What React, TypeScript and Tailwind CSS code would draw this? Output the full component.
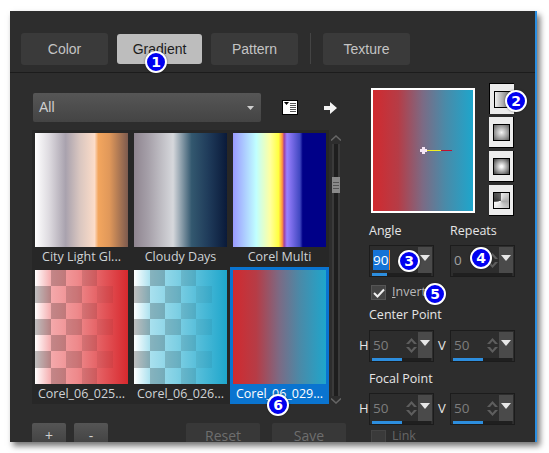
import React from "react";

const RED_BLUE = "bg-[linear-gradient(90deg,#d12a2f_0%,#b63c46_25%,#7b6b85_50%,#4a8aa8_72%,#1ea6cc_100%)]";

// how strong the darker squares are per column, fades out to the right
const CHECK = ["bg-black/25", "bg-black/20", "bg-black/15", "bg-black/10", "bg-black/5", ""];

const Badge = ({ n, className }: { n: number; className: string }) => (
  <div
    className={`absolute flex h-[22px] w-[22px] items-center justify-center rounded-full border-2 border-white bg-[#0000f0] font-['DejaVu_Sans'] text-[14px] leading-none font-bold text-white shadow-[0_0_2px_rgba(0,0,0,0.5)] ${className}`}
  >
    {n}
  </div>
);

const Tab = ({ label, active }: { label: string; active?: boolean }) => (
  <button
    className={
      active
        ? "h-[30px] w-[85px] rounded-[3px] bg-[#bdbdbd] text-[14px] text-[#1c1c1c]"
        : "h-[32px] w-[87px] rounded-[3px] bg-[#3a3a3a] text-[14px] text-[#c4c4c4]"
    }
  >
    {label}
  </button>
);

const Checker = () => (
  <div className="grid h-full w-full grid-cols-6 grid-rows-7">
    {Array.from({ length: 42 }).map((_, i) => {
      const row = Math.floor(i / 6);
      const col = i % 6;
      return <div key={i} className={(row + col) % 2 === 1 ? CHECK[col] : ""} />;
    })}
  </div>
);

const Thumb = ({
  label,
  bg,
  checker,
  selected,
}: {
  label: string;
  bg: string;
  checker?: boolean;
  selected?: boolean;
}) => (
  <div className={selected ? "h-[137px] w-[99px] bg-[#0a74d0] p-[3px] pb-0" : "h-[137px] w-[99px] p-[3px] pb-0"}>
    <div className={`h-[114px] w-[93px] ${bg}`}>{checker && <Checker />}</div>
    <div className={selected ? "h-[20px] text-center text-[12.5px] leading-[20px] whitespace-nowrap text-white" : "h-[20px] text-center text-[12.5px] leading-[20px] whitespace-nowrap text-[#cfd3d6]"}>
      {label}
    </div>
  </div>
);

const Spin = ({ value, bar, selected, bright }: { value: string; bar: string; selected?: boolean; bright?: boolean }) => (
  <div className="relative h-[32px] w-[65px] border border-[#1c1c1c] bg-[#2d2d2d] p-[1px]">
    <div className="flex h-[26px]">
      <div className="flex w-[34px] items-center pl-[2px] text-[13.5px]">
        {selected ? (
          <span className="border-r border-[#f08020] bg-[#1573d6] pr-[1px] text-white">{value}</span>
        ) : (
          <span className={bright ? "text-[#a0a0a0]" : "text-[#7d7d7d]"}>{value}</span>
        )}
      </div>
      <div className="flex w-[14px] flex-col items-center justify-center gap-[3px]">
        <svg width="11" height="6" viewBox="0 0 11 6"><path d="M0 6L5.5 0L11 6H8L5.5 3L3 6Z" fill="#5e5e5e" /></svg>
        <svg width="11" height="6" viewBox="0 0 11 6"><path d="M0 0L5.5 6L11 0H8L5.5 3L3 0Z" fill="#5e5e5e" /></svg>
      </div>
      <div className="ml-auto flex w-[14px] justify-center bg-[#4a4a4a] pt-[8px]">
        <svg width="10" height="6" viewBox="0 0 10 6"><path d="M0 0H10L5 6Z" fill="#e8e8e8" /></svg>
      </div>
    </div>
    <div className="mx-[1px] h-[3px] bg-[#1f1f1f]">
      <div className={`h-full bg-[#2d8ede] ${bar}`} />
    </div>
  </div>
);

const TypeButton = ({ inner, pressed }: { inner: string; pressed?: boolean }) => (
  <div
    className={
      pressed
        ? "flex h-[31px] w-[25px] items-center justify-center border-t border-l border-black bg-[#ececec]"
        : "flex h-[31px] w-[25px] items-center justify-center border-r border-b border-black bg-[#ececec]"
    }
  >
    <div className={`h-[17px] w-[17px] border border-black ${inner}`} />
  </div>
);

const Label = ({ children, className = "" }: { children: React.ReactNode; className?: string }) => (
  <div className={`text-[12.5px] leading-[18px] text-[#e6e6e6] ${className}`}>{children}</div>
);

const SpinRow = () => (
  <div className="flex items-center">
    <div className="w-[10px] text-[13px] text-[#e6e6e6]">H</div>
    <Spin value="50" bar="w-1/2" />
    <div className="w-[16px] text-center text-[13px] text-[#e6e6e6]">V</div>
    <Spin value="50" bar="w-1/2" />
  </div>
);

const ActionButton = ({ label, w, dim }: { label: string; w: string; dim?: boolean }) => (
  <button
    className={
      dim
        ? `h-[19px] rounded-t-[2px] bg-[#383838] pt-[6px] text-[14px] leading-[14px] text-[#6e6e6e] ${w}`
        : `h-[19px] rounded-t-[2px] bg-[linear-gradient(180deg,#555,#444)] pt-[6px] text-[14px] leading-[14px] text-[#d0d0d0] ${w}`
    }
  >
    {label}
  </button>
);

export default function App() {
  return (
    <div className="h-[453px] w-[549px] overflow-hidden bg-white pt-[11px] pl-[10px] font-['Open_Sans',sans-serif]">
      <div className="relative h-[431px] w-[527px] overflow-hidden border-r-2 border-[#2a8ee0] bg-[#2d2d2d] shadow-[3px_4px_6px_rgba(0,0,0,0.55)]">
        {/* tabs */}
        <div className="flex h-[62px] items-start gap-[9px] border-b border-[#1c1c1c] pt-[22px] pl-[11px] font-['Liberation_Sans',sans-serif]">
          <Tab label="Color" />
          <div className="pt-[1px]">
            <Tab label="Gradient" active />
          </div>
          <Tab label="Pattern" />
          <div className="mx-[3px] h-[31px] w-px bg-[#444]" />
          <Tab label="Texture" />
        </div>

        <div className="flex">
          {/* left side */}
          <div className="w-[349px] pt-[20px] pl-[22px]">
            <div className="ml-[1px] flex items-center">
              <div className="flex h-[29px] w-[228px] items-center justify-between rounded-[2px] bg-[linear-gradient(180deg,#565656,#444)] pr-[7px] pl-[6px] font-['Liberation_Sans',sans-serif] text-[14px] text-[#cfcfcf]">
                All
                <svg width="7" height="4" viewBox="0 0 7 4"><path d="M0 0H7L3.5 4Z" fill="#cfcfcf" /></svg>
              </div>
              <svg className="ml-[21px]" width="16" height="15" viewBox="0 0 16 15">
                <rect x="0.5" y="0.5" width="15" height="14" fill="#fff" stroke="#000" />
                <path d="M2 2H7L4.5 5Z" fill="#000" />
                <path d="M8 3.5H14M8 5.5H14M8 7.5H14M8 9.5H14M8 11.5H14" stroke="#555" />
              </svg>
              <svg className="ml-[26px]" width="13" height="12" viewBox="0 0 13 12">
                <path d="M0 4H6V0L13 6L6 12V8H0Z" fill="#f4f4f4" />
              </svg>
            </div>

            <div className="mt-[8px] flex">
              <div className="h-[274px] w-[297px] bg-[#272727]">
                <div className="grid grid-cols-3">
                  <Thumb label="City Light Gl..." bg="bg-[linear-gradient(90deg,#fff_0%,#dedbe0_15%,#a9a2ae_33%,#d9c6c0_48%,#fcdcc8_64%,#f3a65e_68%,#e0985a_80%,#7d5a4e_100%)]" />
                  <Thumb label="Cloudy Days" bg="bg-[linear-gradient(90deg,#8f8590_0%,#a59fa8_15%,#d6d8dc_42%,#33586f_62%,#1f3b5a_80%,#0a1a3a_100%)]" />
                  <Thumb label="Corel Multi" bg="bg-[linear-gradient(90deg,#9a9aff_0%,#c0ffff_25%,#ffffa0_40%,#ffff40_49%,#ff9040_53%,#a040a0_55%,#9a80ff_58%,#4048c0_72%,#000088_75%,#000088_100%)]" />
                  <Thumb label="Corel_06_025..." bg="bg-[linear-gradient(90deg,#fff_0%,#f4a8aa_18%,#ee8a8c_45%,#d8292e_100%)]" checker />
                  <Thumb label="Corel_06_026..." bg="bg-[linear-gradient(90deg,#fff_0%,#a8e0ee_18%,#80d0e4_45%,#1ea6cc_100%)]" checker />
                  <Thumb label="Corel_06_029..." bg={RED_BLUE} selected />
                </div>
              </div>
              {/* scrollbar */}
              <div className="flex h-[274px] w-[13px] flex-col items-center pt-[5px]">
                <svg width="10" height="6" viewBox="0 0 10 6"><path d="M0 5.5L5 1L10 5.5" fill="none" stroke="#666" strokeWidth="1.5" /></svg>
                <div className="mt-[3px] h-[252px] w-[8px] border-x-2 border-[#3a3a3a] bg-[#1e1e1e]">
                  <div className="-ml-[2px] mt-[33px] flex h-[16px] w-[8px] flex-col justify-center gap-[2px] bg-[#8a8a8a] px-[1px]">
                    <div className="h-px bg-[#555]" />
                    <div className="h-px bg-[#555]" />
                    <div className="h-px bg-[#555]" />
                  </div>
                </div>
                <svg className="mt-[2px]" width="10" height="6" viewBox="0 0 10 6"><path d="M0 0.5L5 5L10 0.5" fill="none" stroke="#666" strokeWidth="1.5" /></svg>
              </div>
            </div>

            <div className="mt-[19px] flex">
              <ActionButton label="+" w="w-[34px]" />
              <ActionButton label="-" w="ml-[8px] w-[34px]" />
              <ActionButton label="Reset" w="ml-[78px] w-[74px]" dim />
              <ActionButton label="Save" w="ml-[12px] w-[74px]" dim />
            </div>
          </div>

          {/* right side */}
          <div className="w-[170px]">
            <div className="flex items-start pt-[10px]">
              <div className={`mt-[5px] ml-[12px] h-[125px] w-[104px] border-2 border-white ${RED_BLUE} relative`}>
                <svg className="absolute top-[56px] left-[46px]" width="36" height="9" viewBox="0 0 36 9">
                  <path d="M3 1H6V3H8V6H6V8H3V6H1V3H3Z" fill="#f5e6f5" />
                  <path d="M8 4.5H22" stroke="#f0f020" />
                  <path d="M22 4.5H33" stroke="#c01030" />
                </svg>
              </div>
              <div className="ml-[14px] flex flex-col gap-[3px]">
                <TypeButton pressed inner="bg-[linear-gradient(90deg,#f0f0f0,#707070)]" />
                <TypeButton inner="bg-[radial-gradient(circle,#f4f4f4,#606060)]" />
                <TypeButton inner="bg-[radial-gradient(circle,#f8f8f8_10%,#505050_90%)]" />
                <TypeButton inner="bg-[conic-gradient(from_0deg_at_45%_55%,#eee_0deg,#aaa_90deg,#ddd_180deg,#f8f8f8_260deg,#333_270deg,#666_360deg)]" />
              </div>
            </div>

            <div className="mt-[6px] flex pl-[10px]">
              <div className="w-[81px]">
                <Label>Angle</Label>
              </div>
              <Label>Repeats</Label>
            </div>
            <div className="mt-[5px] flex gap-[16px] pl-[10px]">
              <Spin value="90" bar="w-1/4" selected />
              <Spin value="0" bar="w-0" bright />
            </div>
            <div className="mt-[8px] flex h-[15px] items-center pl-[12px]">
              <div className="flex h-[15px] w-[15px] items-center justify-center border border-[#555] bg-[#444]">
                <svg width="12" height="10" viewBox="0 0 12 10"><path d="M1 5L4.5 8.5L11 1.5" fill="none" stroke="#f0f0f0" strokeWidth="2" /></svg>
              </div>
              <span className="ml-[6px] text-[12.5px] text-[#b8b8b8]"><span className="underline">I</span>nvert</span>
            </div>
            <Label className="mt-[6px] pl-[10px]">Center Point</Label>
            <div className="mt-[6px]">
              <SpinRow />
            </div>
            <Label className="mt-[8px] pl-[10px]">Focal Point</Label>
            <div className="mt-[5px]">
              <SpinRow />
            </div>
            <div className="mt-[5px] flex h-[12px] items-start pl-[12px]">
              <div className="h-[12px] w-[15px] border-x border-t border-[#444] bg-[#3a3a3a]" />
              <span className="ml-[6px] text-[12.5px] leading-[12px] text-[#666]">Link</span>
            </div>
          </div>
        </div>

        {/* numbered callouts */}
        <Badge n={1} className="top-[40px] left-[135px]" />
        <Badge n={2} className="top-[79px] left-[495px]" />
        <Badge n={3} className="top-[239px] left-[388px]" />
        <Badge n={4} className="top-[236px] left-[460px]" />
        <Badge n={5} className="top-[272px] left-[414px]" />
        <Badge n={6} className="top-[383px] left-[257px]" />
      </div>
    </div>
  );
}
